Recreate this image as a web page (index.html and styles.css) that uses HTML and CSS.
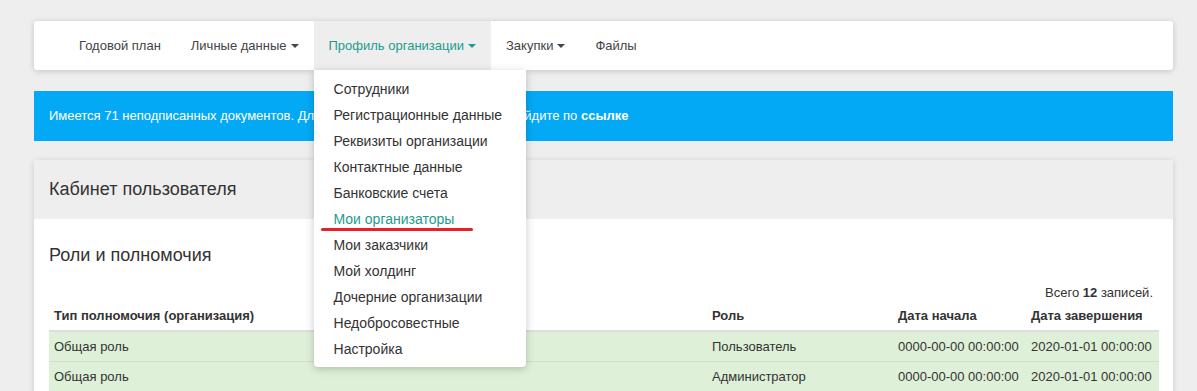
FILE: index.html
```html
<!DOCTYPE html>
<html lang="ru">
<head>
    <meta charset="UTF-8">
    <title>Кабинет пользователя</title>
    <link rel="stylesheet" href="styles.css">
</head>
<body>
    <div class="page">
        <nav class="navbar">
            <ul class="nav">
                <li><a href="#">Годовой план</a></li>
                <li><a href="#">Личные данные <span class="caret"></span></a></li>
                <li class="dropdown open">
                    <a href="#">Профиль организации <span class="caret"></span></a>
                    <ul class="dropdown-menu">
                        <li><a href="#">Сотрудники</a></li>
                        <li><a href="#">Регистрационные данные</a></li>
                        <li><a href="#">Реквизиты организации</a></li>
                        <li><a href="#">Контактные данные</a></li>
                        <li><a href="#">Банковские счета</a></li>
                        <li class="marked"><a href="#" class="current">Мои организаторы</a></li>
                        <li><a href="#">Мои заказчики</a></li>
                        <li><a href="#">Мой холдинг</a></li>
                        <li><a href="#">Дочерние организации</a></li>
                        <li><a href="#">Недобросовестные</a></li>
                        <li><a href="#">Настройка</a></li>
                    </ul>
                </li>
                <li><a href="#">Закупки <span class="caret"></span></a></li>
                <li><a href="#">Файлы</a></li>
            </ul>
        </nav>

        <div class="alert">
            Имеется 71 неподписанных документов. Для их просмотра и подписания перейдите по <b>ссылке</b>
        </div>

        <div class="panel">
            <div class="panel-heading">Кабинет пользователя</div>
            <div class="panel-body">
                <h3>Роли и полномочия</h3>
                <div class="summary">Всего <b>12</b> записей.</div>
                <table class="grid">
                    <thead>
                        <tr>
                            <th class="col-type">Тип полномочия (организация)</th>
                            <th class="col-role">Роль</th>
                            <th class="col-date">Дата начала</th>
                            <th class="col-date">Дата завершения</th>
                        </tr>
                    </thead>
                    <tbody>
                        <tr>
                            <td>Общая роль</td>
                            <td>Пользователь</td>
                            <td>0000-00-00 00:00:00</td>
                            <td>2020-01-01 00:00:00</td>
                        </tr>
                        <tr>
                            <td>Общая роль</td>
                            <td>Администратор</td>
                            <td>0000-00-00 00:00:00</td>
                            <td>2020-01-01 00:00:00</td>
                        </tr>
                    </tbody>
                </table>
            </div>
        </div>
    </div>
</body>
</html>
```

FILE: styles.css
```css
body {
    margin: 0;
    background: #eeeeee;
    font-family: "Liberation Sans", Arial, sans-serif;
    font-size: 13px;
    color: #333;
}
a {
    text-decoration: none;
    color: inherit;
}
.page {
    padding: 21px 24px 0 34px;
}
.navbar {
    background: #fff;
    height: 49px;
    border-radius: 3px;
    box-shadow: 0 1px 6px rgba(0,0,0,0.18);
    padding-left: 30px;
    margin-bottom: 21px;
}
.nav {
    list-style: none;
    margin: 0;
    padding: 0;
    display: flex;
    height: 100%;
}
.nav > li {
    position: relative;
}
.nav > li > a {
    display: flex;
    align-items: center;
    height: 49px;
    padding: 0 15px;
    color: #444;
}
.nav > li.open > a {
    background: #eeeeee;
    color: #1b9c8c;
}
.caret {
    display: inline-block;
    width: 0;
    height: 0;
    margin-left: 4px;
    border-top: 4px solid;
    border-left: 4px solid transparent;
    border-right: 4px solid transparent;
}
.dropdown-menu {
    position: absolute;
    top: 49px;
    left: 0;
    z-index: 10;
    width: 212px;
    margin: 0;
    padding: 6px 0 5px;
    list-style: none;
    background: #fff;
    border-radius: 0 0 4px 4px;
    box-shadow: 0 2px 8px rgba(0,0,0,0.22);
    font-size: 14px;
}
.dropdown-menu li {
    position: relative;
}
.dropdown-menu a {
    display: block;
    padding: 3px 20px;
    line-height: 20px;
    color: #333;
    white-space: nowrap;
}
.dropdown-menu a.current {
    color: #1b9c8c;
}
/* red marker under the chosen item */
.dropdown-menu li.marked::after {
    content: "";
    position: absolute;
    left: 7px;
    top: 22px;
    width: 152px;
    height: 3px;
    border-radius: 2px;
    background: #e8202a;
}
.alert {
    background: #03a9f4;
    color: #fff;
    height: 50px;
    line-height: 50px;
    padding: 0 15px;
    margin-bottom: 19px;
    white-space: nowrap;
}
.panel {
    background: #fff;
    border-radius: 3px;
    box-shadow: 0 1px 6px rgba(0,0,0,0.15);
}
.panel-heading {
    background: #eeeeee;
    height: 59px;
    line-height: 59px;
    padding: 0 15px;
    font-size: 18px;
    border-radius: 3px 3px 0 0;
}
.panel-body {
    padding: 24px 15px 20px;
}
.panel-body h3 {
    margin: 0;
    font-size: 18px;
    font-weight: normal;
    line-height: 24px;
}
.summary {
    text-align: right;
    margin: 18px 0 0;
    padding-right: 5px;
    line-height: 16px;
}
.grid {
    width: 100%;
    border-collapse: collapse;
    table-layout: fixed;
}
.grid th {
    text-align: left;
    font-weight: bold;
    padding: 6px 5px 5px;
    line-height: 18px;
    border-bottom: 2px solid #dddddd;
}
.grid td {
    padding: 0 5px;
    height: 29px;
    line-height: 18px;
    background: #dff0d8;
    border-bottom: 1px solid #d4ddd0;
    white-space: nowrap;
}
.grid .col-type { width: 648px; }
.grid .col-role { width: 176px; }
.grid .col-date { width: 123px; }
```
